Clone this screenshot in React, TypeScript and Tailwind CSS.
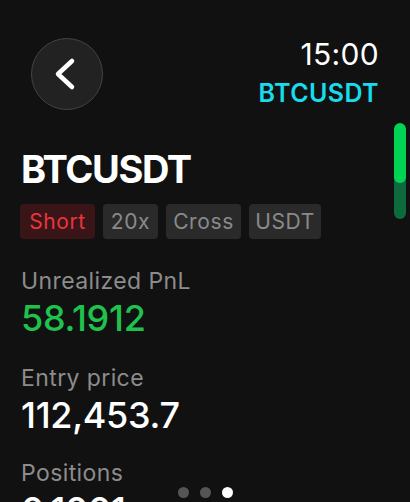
import React from "react";

function Tag({ label, red, w }: { label: string; red?: boolean; w: string }) {
  return (
    <div
      className={`${w} h-[35px] rounded-[4px] flex items-center justify-center text-[21px] leading-none tracking-[0.6px] ${
        red ? "bg-[#3a1517] text-[#e8363f]" : "bg-[#2a2a2a] text-[#8a8a8a]"
      }`}
    >
      {label}
    </div>
  );
}

export default function App() {
  return (
    <div
      className="relative w-[410px] h-[502px] overflow-hidden bg-[#111111] text-white"
      style={{ fontFamily: "Inter, 'Noto Sans', sans-serif" }}
    >
      {/* header */}
      <div className="flex justify-between pl-[31px] pr-[31px] pt-[38px]">
        <div className="w-[72px] h-[72px] rounded-full bg-[#222222] border-[1.5px] border-[#444444] flex items-center justify-center">
          <svg width="30" height="34" viewBox="0 0 30 34" fill="none">
            <path d="M20 4 L6 17 L20 30" stroke="white" strokeWidth="4.5" strokeLinecap="round" strokeLinejoin="round" />
          </svg>
        </div>
        <div className="flex flex-col items-end pt-[1px]">
          <div className="text-[30px] leading-[30px] font-normal tracking-[0.3px]">15:00</div>
          <div className="mt-[12px] text-[25px] leading-[25px] font-semibold text-[#18dcec] tracking-[0.4px]">BTCUSDT</div>
        </div>
      </div>

      {/* content */}
      <div className="pl-[21px]">
        <div className="mt-[40px] text-[38px] leading-[38px] font-bold tracking-[-1.4px]">BTCUSDT</div>
        <div className="mt-[16px] flex gap-[8px] -ml-[1px]">
          <Tag label="Short" red w="w-[75px]" />
          <Tag label="20x" w="w-[55px]" />
          <Tag label="Cross" w="w-[75px]" />
          <Tag label="USDT" w="w-[72px]" />
        </div>

        <div className="mt-[28px] text-[23px] leading-[28px] text-[#8c8c8c] tracking-[0.4px]">Unrealized PnL</div>
        <div className="mt-[3px] text-[36px] leading-[40px] text-[#1fc24d] font-medium tracking-[-0.3px]">58.1912</div>

        <div className="mt-[26px] text-[23px] leading-[28px] text-[#8c8c8c] tracking-[0.4px]">Entry price</div>
        <div className="mt-[3px] text-[36px] leading-[40px] font-medium tracking-[-0.3px]">112,453.7</div>

        <div className="mt-[24px] text-[23px] leading-[28px] text-[#8c8c8c] tracking-[0.4px]">Positions</div>
        <div className="mt-[3px] text-[36px] leading-[40px] font-medium tracking-[-0.3px]">0.1001</div>
      </div>

      {/* scroll indicator */}
      <div className="absolute left-[394px] top-[123px] w-[12px] h-[96px] rounded-full bg-[#0d6a3c] overflow-hidden">
        <div className="w-full h-[60px] rounded-full bg-[#00d455]" />
      </div>

      {/* page dots */}
      <div className="absolute left-0 right-0 top-[487px] flex justify-center gap-[11px]">
        <div className="w-[11px] h-[11px] rounded-full bg-[#555555]" />
        <div className="w-[11px] h-[11px] rounded-full bg-[#555555]" />
        <div className="w-[11px] h-[11px] rounded-full bg-white" />
      </div>
    </div>
  );
}
